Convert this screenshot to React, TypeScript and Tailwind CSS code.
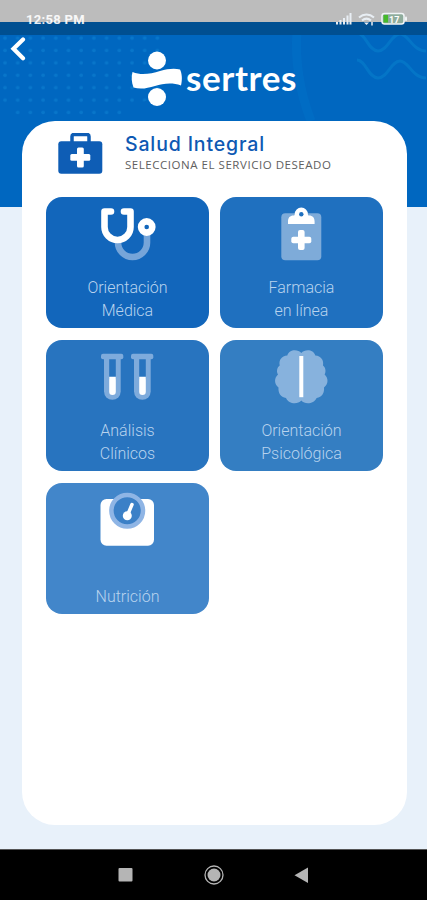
import type { ReactNode } from 'react'

type Service = {
    id: string
    lines: string[]
    color: string
    icon: ReactNode
}

const services: Service[] = [
    {
        id: 'medica',
        lines: ['Orientación', 'Médica'],
        color: 'bg-[#1266bb]',
        icon: (
            <g fill="none" strokeWidth="6.6">
                <path d="M72 44v1.500a14.500 14.500 0 0 0 29 0V36" stroke="#76a5d9" />
                <path
                    d="M65 14.500H58.500V30a13 13 0 0 0 26 0V14.500H78"
                    stroke="#fff"
                    strokeLinecap="round"
                    strokeLinejoin="round"
                />
                <circle cx="100.700" cy="30" r="5.600" stroke="#fff" />
            </g>
        ),
    },
    {
        id: 'farmacia',
        lines: ['Farmacia', 'en línea'],
        color: 'bg-[#1f70bf]',
        icon: (
            <g fill="#fff">
                <rect x="61.300" y="16.300" width="40" height="47" rx="4" fill="#7eabd9" />
                <path d="M68 27v-2.500c0-3.700 2-6 5.500-6 .8 0 1.200-.5 1.200-1.300a6.600 6.600 0 0 1 13.200 0c0 .8.4 1.300 1.200 1.300 3.500 0 5.500 2.300 5.500 6V27z" />
                <circle cx="81.300" cy="17.300" r="2.200" fill="#1f70bf" />
                <rect x="71.300" y="39.700" width="20" height="6.600" rx="2" />
                <rect x="78" y="33" width="6.600" height="20" rx="2" />
            </g>
        ),
    },
    {
        id: 'analisis',
        lines: ['Análisis', 'Clínicos'],
        color: 'bg-[#2874bf]',
        icon: (
            <>
                {[0, 30].map((x) => (
                    <g key={x} transform={`translate(${x} 0)`}>
                        <rect x="55" y="13.700" width="22.300" height="5.600" rx="2" fill="#7eabdc" />
                        <path d="M58 17h16.700v34.500a8.350 8.350 0 0 1-16.700 0z" fill="#7eabdc" />
                        <path d="M63.200 19.300h6.600v20h-6.600z" fill="#2874bf" />
                        <path d="M63.200 36.700h6.600v15a3.300 3.300 0 0 1-6.600 0z" fill="#fff" />
                    </g>
                ))}
            </>
        ),
    },
    {
        id: 'psicologica',
        lines: ['Orientación', 'Psicológica'],
        color: 'bg-[#347ec2]',
        icon: (
            <>
                <path
                    d="M81.300 13C78 9 69 9 67.300 15.500 61.500 16 58.500 20 59.700 25.500 56.500 28 56.500 32 58 34.500 54 38 54 44 58.500 47.500 58 53 60.500 57 66 58 68.500 64 77.500 65 81.300 60.500 85 65 94 64 96.600 58 102 57 104.600 53 104 47.500 108.600 44 108.600 38 104.600 34.500 106 32 106 28 103 25.500 104 20 101 16 95.300 15.500 93.600 9 84.600 9 81.300 13z"
                    fill="#87b2dd"
                />
                <path d="M79.300 16h4v41.200h-4z" fill="#fff" />
            </>
        ),
    },
    {
        id: 'nutricion',
        lines: ['Nutrición'],
        color: 'bg-[#4286ca]',
        icon: (
            <>
                <rect x="54.500" y="16" width="53.500" height="46.700" rx="6" fill="#fff" />
                <circle cx="81.200" cy="27.700" r="15.800" fill="#3b80c7" stroke="#8fb5e5" strokeWidth="4.500" />
                <circle cx="81.300" cy="32.700" r="4.500" fill="#fff" />
                <path d="M81.800 31.500l4.200-10" stroke="#fff" strokeWidth="3.500" strokeLinecap="round" />
            </>
        ),
    },
]

const StatusBar = () => (
    <div className="relative flex h-[35px] items-end justify-between bg-[linear-gradient(#bcbcbc_22px,#004f91_22px)] pr-[18px] pb-[8px] pl-[26px]">
        <span className="font-['Roboto'] text-[13px] leading-[14px] font-bold tracking-[0.3px] text-white/90">
            12:58 PM
        </span>
        <svg width="74" height="15" viewBox="0 0 74 15">
            <path d="M1 12.500v-2.500h2v2.500zM4.500 12.500V8h2v4.500zM8 12.500V6h2v6.500zM11.500 12.500V3.500h2v9zM14.500 12.500V1h2v11.500z" fill="#e8eef4" />
            <g fill="none" stroke="#e8eef4" strokeWidth="2">
                <path d="M24 5.500c4.500-4 10.500-4 15 0M27 8.500c3-2.500 6-2.500 9 0" />
            </g>
            <path d="M29 10.500h5l-2.500 2.500z" fill="#e8eef4" />
            <path d="M37 10v3.500" stroke="#e8eef4" strokeWidth="1.500" />
            <rect x="47" y="1.500" width="22" height="10.500" rx="2.500" fill="#8eac9c" stroke="#f1f5f7" strokeWidth="1.500" />
            <rect x="48.500" y="3" width="4.500" height="7.500" fill="#45b92b" />
            <rect x="70" y="4.500" width="2" height="4.500" rx="1" fill="#f1f5f7" />
            <text x="54" y="10.500" fontSize="9" fontWeight="700" fill="#fff" fontFamily="Roboto, sans-serif">
                17
            </text>
        </svg>
    </div>
)

const HeaderPattern = () => (
    <svg className="absolute inset-x-0 top-0 h-[207px] w-full" viewBox="0 0 427 207" preserveAspectRatio="none">
        <defs>
            <pattern id="dots" width="12.700" height="12.400" patternUnits="userSpaceOnUse" y="32">
                <circle cx="5" cy="6" r="1.800" fill="#0876ca" />
            </pattern>
        </defs>
        <rect width="427" height="207" fill="#0067c0" />
        <path d="M0 30h165v60L110 121H22L0 105z" fill="url(#dots)" />
        <path d="M297 30c-2 28 2 60 14 91" fill="none" stroke="#0070c6" strokeWidth="9" opacity=".6" />
        <g fill="none" stroke="#0475c7" strokeWidth="3">
            <path d="M357 33c9 0 11 18 21 18s13-17 22-17 12 17 26 17" />
            <path d="M357 60c9 0 11 18 21 18s13-17 22-17 12 17 26 17" />
        </g>
    </svg>
)

const Logo = () => (
    <div className="ml-[131px] flex h-[56px] items-center">
        <svg width="52" height="56" viewBox="0 0 52 56" fill="#fff">
            <circle cx="26" cy="9.500" r="9" />
            <circle cx="26" cy="46" r="9" />
            <path d="M1.500 21C11 25 20 22.500 29 20 37 17.500 44 17 49 18.500c2 4 2.500 10 1 16C41 31 32 32.500 24 35c-8 2.500-15 3.500-21.500 1.500C.5 31 .2 26 1.500 21z" />
        </svg>
        <span className="mb-[3px] ml-[3px] font-['Lato'] text-[35px] leading-none font-bold tracking-[0.6px] text-white">
            sertres
        </span>
    </div>
)

const ServiceTile = ({ service }: { service: Service }) => (
    <button
        type="button"
        className={`flex h-[131px] flex-col items-center justify-between rounded-[16px] pb-[6px] ${service.color}`}
    >
        <svg width="163" height="70" viewBox="0 0 163 70">
            {service.icon}
        </svg>
        <span className="font-['Roboto'] text-[16px] leading-[23px] font-light text-[#b8d3ee]">
            {service.lines.map((line) => (
                <span key={line} className="block">
                    {line}
                </span>
            ))}
        </span>
    </button>
)

const NavBar = () => (
    <div className="flex h-[51px] justify-center border-t border-[#555] bg-black">
        <svg width="200" height="50" viewBox="114 850 200 50" fill="#b5b5b5">
            <rect x="118.500" y="868" width="14" height="13.500" rx="1" />
            <circle cx="214" cy="875" r="6.500" />
            <circle cx="214" cy="875" r="9" fill="none" stroke="#b5b5b5" strokeWidth="1.300" />
            <path d="M308 867.500v15.500l-13.500-7.800z" />
        </svg>
    </div>
)

const App = () => (
    <main className="relative flex h-[900px] w-full flex-col overflow-hidden bg-[#e8f1fa]">
        <HeaderPattern />
        <StatusBar />
        <div className="relative flex h-[86px] items-start pt-[16px]">
            <button type="button" className="absolute top-[2px] left-[10px]" aria-label="Volver">
                <svg width="16" height="24" viewBox="0 0 16 24">
                    <path
                        d="M13 2.500L3.500 11.700l9.500 9.500"
                        fill="none"
                        stroke="#fff"
                        strokeWidth="4.200"
                        strokeLinecap="round"
                    />
                </svg>
            </button>
            <Logo />
        </div>
        <section className="relative mr-[20px] ml-[22px] h-[704px] rounded-[33px] bg-white px-[24px] pt-[12px]">
            <div className="flex h-[64px] items-start pl-[12px]">
                <svg width="45" height="42" viewBox="58 134 45 42" className="shrink-0">
                    <path d="M72 144v-6.500q0-2 2-2h13q2 0 2 2v6.500" fill="none" stroke="#0e5db5" strokeWidth="3.500" />
                    <rect x="58.300" y="142.300" width="44" height="32.500" rx="3" fill="#0e5db5" />
                    <rect x="70.300" y="155" width="20" height="6.800" rx="1.500" fill="#fff" />
                    <rect x="77" y="148.500" width="6.800" height="20" rx="1.500" fill="#fff" />
                </svg>
                <div className="ml-[22px]">
                    <h1 className="font-['Inter'] text-[19.500px] leading-[23px] font-medium tracking-[0.85px] text-[#0e59b3]">
                        Salud Integral
                    </h1>
                    <p className="mt-[1px] font-['Open_Sans'] text-[11.500px] leading-[16px] tracking-[0.54px] whitespace-nowrap text-[#606060]">
                        SELECCIONA EL SERVICIO DESEADO
                    </p>
                </div>
            </div>
            <div className="grid grid-cols-[163px_163px] gap-x-[11px] gap-y-[12px]">
                {services.map((service) => (
                    <ServiceTile key={service.id} service={service} />
                ))}
            </div>
        </section>
        <div className="relative mt-auto">
            <NavBar />
        </div>
    </main>
)

export default App
